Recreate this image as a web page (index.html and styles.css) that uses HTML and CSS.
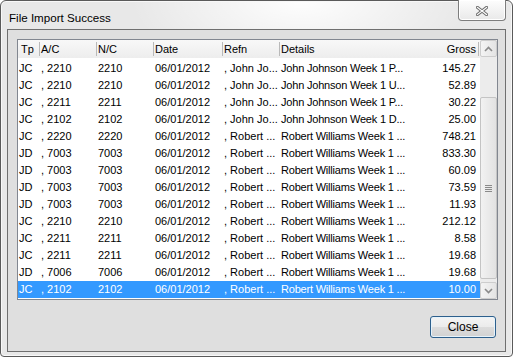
FILE: index.html
```html
<!DOCTYPE html>
<html>
<head>
<meta charset="utf-8">
<link rel="stylesheet" href="styles.css">
</head>
<body>
<div class="window">
  <div class="titlebar">
    <span class="title">File Import Success</span>
    <div class="xbtn">
      <svg width="12" height="10" viewBox="0 0 12 10">
        <path d="M1.5 1.5 L10.5 8.5 M10.5 1.5 L1.5 8.5" stroke="#6e6e6e" stroke-width="3.2" stroke-linecap="square" fill="none"/>
        <path d="M1.5 1.5 L10.5 8.5 M10.5 1.5 L1.5 8.5" stroke="#ffffff" stroke-width="1.2" stroke-linecap="square" fill="none"/>
      </svg>
    </div>
  </div>
  <div class="client">
    <div class="listview">
      <div class="list">
        <div class="row head">
          <span class="c1">Tp</span><span>A/C</span><span>N/C</span><span>Date</span><span>Refn</span><span>Details</span><span class="num">Gross</span>
        </div>
        <div class="rows">
          <div class="row"><span class="c1">JC</span><span>, 2210</span><span>2210</span><span>06/01/2012</span><span>, John Jo...</span><span class="det">John Johnson Week 1 P...</span><span class="num">145.27</span></div>
          <div class="row"><span class="c1">JC</span><span>, 2210</span><span>2210</span><span>06/01/2012</span><span>, John Jo...</span><span class="det">John Johnson Week 1 U...</span><span class="num">52.89</span></div>
          <div class="row"><span class="c1">JC</span><span>, 2211</span><span>2211</span><span>06/01/2012</span><span>, John Jo...</span><span class="det">John Johnson Week 1 P...</span><span class="num">30.22</span></div>
          <div class="row"><span class="c1">JC</span><span>, 2102</span><span>2102</span><span>06/01/2012</span><span>, John Jo...</span><span class="det">John Johnson Week 1 D...</span><span class="num">25.00</span></div>
          <div class="row"><span class="c1">JC</span><span>, 2220</span><span>2220</span><span>06/01/2012</span><span>, Robert ...</span><span class="det">Robert Williams Week 1 ...</span><span class="num">748.21</span></div>
          <div class="row"><span class="c1">JD</span><span>, 7003</span><span>7003</span><span>06/01/2012</span><span>, Robert ...</span><span class="det">Robert Williams Week 1 ...</span><span class="num">833.30</span></div>
          <div class="row"><span class="c1">JD</span><span>, 7003</span><span>7003</span><span>06/01/2012</span><span>, Robert ...</span><span class="det">Robert Williams Week 1 ...</span><span class="num">60.09</span></div>
          <div class="row"><span class="c1">JD</span><span>, 7003</span><span>7003</span><span>06/01/2012</span><span>, Robert ...</span><span class="det">Robert Williams Week 1 ...</span><span class="num">73.59</span></div>
          <div class="row"><span class="c1">JD</span><span>, 7003</span><span>7003</span><span>06/01/2012</span><span>, Robert ...</span><span class="det">Robert Williams Week 1 ...</span><span class="num">11.93</span></div>
          <div class="row"><span class="c1">JC</span><span>, 2210</span><span>2210</span><span>06/01/2012</span><span>, Robert ...</span><span class="det">Robert Williams Week 1 ...</span><span class="num">212.12</span></div>
          <div class="row"><span class="c1">JC</span><span>, 2211</span><span>2211</span><span>06/01/2012</span><span>, Robert ...</span><span class="det">Robert Williams Week 1 ...</span><span class="num">8.58</span></div>
          <div class="row"><span class="c1">JC</span><span>, 2211</span><span>2211</span><span>06/01/2012</span><span>, Robert ...</span><span class="det">Robert Williams Week 1 ...</span><span class="num">19.68</span></div>
          <div class="row"><span class="c1">JD</span><span>, 7006</span><span>7006</span><span>06/01/2012</span><span>, Robert ...</span><span class="det">Robert Williams Week 1 ...</span><span class="num">19.68</span></div>
          <div class="row sel"><span class="c1">JC</span><span>, 2102</span><span>2102</span><span>06/01/2012</span><span>, Robert ...</span><span class="det">Robert Williams Week 1 ...</span><span class="num">10.00</span></div>
        </div>
      </div>
      <div class="vscroll">
        <div class="arrow">
          <svg width="9" height="6" viewBox="0 0 9 6"><path d="M1 5 L4.5 1.5 L8 5" stroke="#8a8a8a" stroke-width="1.6" fill="none"/></svg>
        </div>
        <div class="track">
          <div class="thumb">
            <svg width="7" height="7" viewBox="0 0 7 7"><path d="M0 0.5 H7 M0 2.5 H7 M0 4.5 H7 M0 6.5 H7" stroke="#8a8a8a" stroke-width="1" fill="none"/></svg>
          </div>
        </div>
        <div class="arrow">
          <svg width="9" height="6" viewBox="0 0 9 6"><path d="M1 1 L4.5 4.5 L8 1" stroke="#8a8a8a" stroke-width="1.6" fill="none"/></svg>
        </div>
      </div>
    </div>
    <div class="actions">
      <button class="btn">Close</button>
    </div>
  </div>
</div>
</body>
</html>
```
FILE: styles.css
```css
body {
  margin: 0;
  background: #ffffff;
  font-family: "Liberation Sans", Arial, sans-serif;
  color: #000;
}

.window {
  width: 513px;
  height: 357px;
  box-sizing: border-box;
  border: 1px solid #5a5a5a;
  border-radius: 6px 6px 4px 4px;
  background:
    radial-gradient(ellipse 170px 70px at 300px 0, rgba(255,255,255,0.95), rgba(255,255,255,0)),
    #e8e8e8;
  box-shadow: inset 0 0 0 1px #f8f8f8;
  padding: 0 6px 4px 6px;
  display: flex;
  flex-direction: column;
}

.titlebar {
  height: 28px;
  display: flex;
  align-items: flex-start;
}

.title {
  font-size: 11.6px;
  padding-left: 2px;
  margin-top: 10px;
}

.xbtn {
  margin-left: auto;
  margin-top: -1px;
  width: 48px;
  height: 21px;
  box-sizing: border-box;
  border: 1px solid #7d7d7d;
  border-top: none;
  border-radius: 0 0 4px 4px;
  background: linear-gradient(#fdfdfd, #e9e9e9);
  box-shadow: inset 0 0 0 1px #ffffff;
  display: flex;
  align-items: center;
  justify-content: center;
  padding-top: 1px;
}

.client {
  flex: 1;
  border: 1px solid #6f6f6f;
  background: #dfdfdf;
  padding: 9px 7px 0 9px;
  display: flex;
  flex-direction: column;
}

.listview {
  width: 481px;
  height: 261px;
  box-sizing: border-box;
  border: 1px solid #828790;
  background: #ffffff;
  display: flex;
}

.list {
  width: 462px;
  font-size: 11px;
}

.row {
  display: grid;
  grid-template-columns: 21px 57px 57px 69px 57px 129px 72px;
  height: 17px;
  line-height: 17px;
}

.row span {
  padding-left: 2px;
  white-space: nowrap;
  overflow: hidden;
}

.row span.c1 {
  padding-left: 1px;
}

.row span.det {
  letter-spacing: -0.2px;
}

.row span.num {
  text-align: right;
  padding-left: 0;
  padding-right: 4px;
}

.head {
  height: 18px;
  line-height: 18px;
  margin-bottom: 2px;
  background: linear-gradient(#f8f8f8, #ededed);
}

.head span {
  background-image: linear-gradient(#b9b9b9, #b9b9b9);
  background-repeat: no-repeat;
  background-size: 1px 14px;
  background-position: 0 2px;
  padding-left: 2px;
}

.head span.c1 {
  background: none;
  padding-left: 3px;
}

.head span.num {
  background-position: right 1px top 2px;
  padding-right: 4px;
}

.sel {
  background: #3399ff;
  color: #ffffff;
}

.vscroll {
  width: 17px;
  display: flex;
  flex-direction: column;
  background: #ececec;
}

.arrow {
  height: 17px;
  box-sizing: border-box;
  border: 1px solid #cdcdcd;
  border-radius: 2px;
  background: linear-gradient(90deg, #f4f4f4, #e4e4e4);
  display: flex;
  align-items: center;
  justify-content: center;
}

.track {
  flex: 1;
  padding-top: 40px;
}

.thumb {
  height: 182px;
  box-sizing: border-box;
  border: 1px solid #c4c4c4;
  border-radius: 2px;
  background: linear-gradient(90deg, #f2f2f2, #e2e2e2);
  display: flex;
  align-items: center;
  justify-content: center;
}

.actions {
  display: flex;
  justify-content: flex-end;
  padding-top: 16px;
  padding-right: 2px;
}

.btn {
  width: 66px;
  height: 22px;
  box-sizing: border-box;
  border: 1px solid #2d5f8c;
  border-radius: 3px;
  background: linear-gradient(#f4f4f4 0%, #ebebeb 50%, #dcdcdc 51%, #d2d2d2 100%);
  box-shadow: inset 0 0 0 1px #e6f3fb;
  font-family: "Liberation Sans", Arial, sans-serif;
  font-size: 12px;
  color: #000;
  padding: 0;
}
```
